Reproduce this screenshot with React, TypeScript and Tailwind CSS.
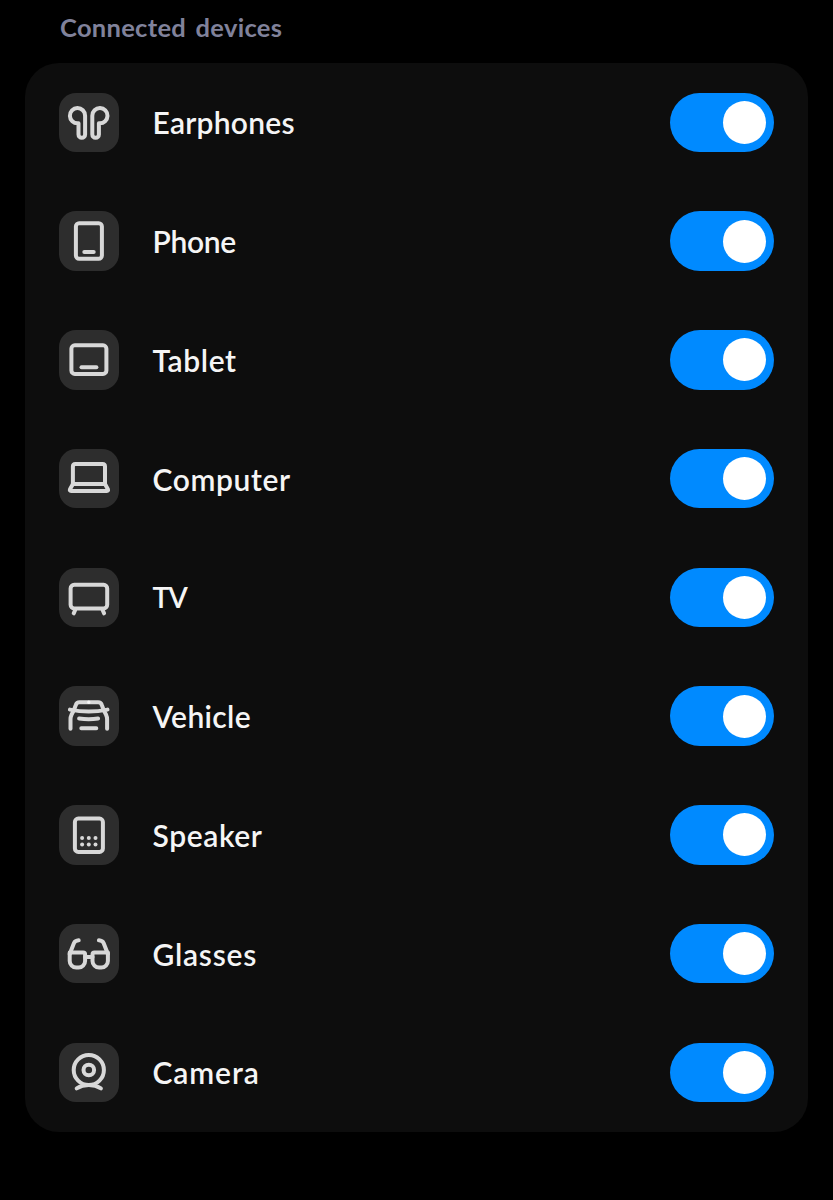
import { ReactNode, useState } from "react";
import clsx from "clsx";

type Device = {
  id: string;
  label: string;
  text: string;
  icon: ReactNode;
};

const DEVICES: Device[] = [
  {
    id: "earphones",
    label: "Earphones",
    text: "text-[30px] tracking-[0.25px]",
    icon: (
      <>
        <path d="M19.5 41.4V30.3H18.8A7.6 7.6 0 1 1 26.1 22.7V41.4A3.3 3.3 0 0 1 19.5 41.4Z" />
        <path d="M39.9 41.4V30.3H40.6A7.6 7.6 0 1 0 33.3 22.7V41.4A3.3 3.3 0 0 0 39.9 41.4Z" />
      </>
    ),
  },
  {
    id: "phone",
    label: "Phone",
    text: "text-[30px] tracking-[-0.3px]",
    icon: (
      <>
        <rect x="16.9" y="12.3" width="26" height="35.4" rx="3.2" />
        <path d="M25.3 41H34.7" />
      </>
    ),
  },
  {
    id: "tablet",
    label: "Tablet",
    text: "text-[30px] tracking-[0.6px]",
    icon: (
      <>
        <rect x="12.4" y="15.3" width="35" height="28.6" rx="3.4" />
        <path d="M22.5 37.3H37.4" />
      </>
    ),
  },
  {
    id: "computer",
    label: "Computer",
    text: "text-[30px] tracking-[0.6px]",
    icon: (
      <>
        <path d="M13.9 35V17.4Q13.9 14.9 16.4 14.9H43.5Q46 14.9 46 17.4V35" />
        <path d="M13.9 35H46L48.9 40.2Q49.6 41.9 47.8 41.9H12.1Q10.3 41.9 11 40.2Z" />
      </>
    ),
  },
  {
    id: "tv",
    label: "TV",
    text: "text-[28.5px] tracking-[-1.2px]",
    icon: (
      <>
        <rect x="11.6" y="16.8" width="36.6" height="23.6" rx="3.6" />
        <path d="M16.2 42L14.7 45.3M43.6 42L45.1 45.3" />
      </>
    ),
  },
  {
    id: "vehicle",
    label: "Vehicle",
    text: "text-[30px] tracking-[0.35px]",
    icon: (
      <>
        <path d="M11.5 42.8V33Q11.5 31 12.5 28.8L14.8 24.4L16.8 19Q17.7 16.3 20.5 16.3H39.1Q41.9 16.3 42.8 19L44.8 24.4L47.1 28.8Q48.1 31 48.1 33V42.8" />
        <path d="M10.9 23.6Q29.8 27.6 48.5 23.6" />
        <path d="M20.1 32.6Q29.8 33.8 39.1 32.6M22.3 42.2H37.3" />
        <circle cx="29.8" cy="16.3" r="1" fill="#f5f5f5" stroke="#f5f5f5" strokeWidth="1.4" />
      </>
    ),
  },
  {
    id: "speaker",
    label: "Speaker",
    text: "text-[30px] tracking-[0.6px]",
    icon: (
      <>
        <rect x="15.9" y="13.6" width="28" height="33.3" rx="3.4" />
        <g fill="currentColor" stroke="none">
          <circle cx="23.1" cy="33.1" r="2" />
          <circle cx="29.8" cy="33.1" r="2" />
          <circle cx="36.5" cy="33.1" r="2" />
          <circle cx="23.1" cy="39.5" r="2" />
          <circle cx="29.8" cy="39.5" r="2" />
          <circle cx="36.5" cy="39.5" r="2" />
        </g>
      </>
    ),
  },
  {
    id: "glasses",
    label: "Glasses",
    text: "text-[30px] tracking-[0.75px]",
    icon: (
      <>
        <path d="M10.7 28.5H24.1Q26.1 28.5 26.1 30.5V37A6.6 6.6 0 0 1 19.5 43.6H17.3A6.6 6.6 0 0 1 10.7 37Z" />
        <path d="M48.9 28.5H35.5Q33.5 28.5 33.5 30.5V37A6.6 6.6 0 0 0 40.1 43.6H42.3A6.6 6.6 0 0 0 48.9 37Z" />
        <path d="M26.1 33H33.5" />
        <path d="M10.7 30L15 19Q16.1 16.6 19.7 16.3" />
        <path d="M48.9 30L44.6 19Q43.5 16.6 39.9 16.3" />
      </>
    ),
  },
  {
    id: "camera",
    label: "Camera",
    text: "text-[30px] tracking-[0.9px]",
    icon: (
      <>
        <circle cx="29.8" cy="27" r="15.1" />
        <circle cx="29.8" cy="27" r="5.3" />
        <path d="M17.7 45.4Q23.1 42.1 29.8 42.1T41.9 45.4" />
      </>
    ),
  },
];

function Toggle({ label, on, onChange }: { label: string; on: boolean; onChange: () => void }) {
  return (
    <button
      type="button"
      role="switch"
      aria-checked={on}
      aria-label={label}
      onClick={onChange}
      className={clsx(
        "flex h-[59.5px] w-[104.5px] items-center rounded-full px-[8.5px] transition-colors",
        on ? "justify-end bg-[#008aff]" : "justify-start bg-[#3a3a3a]"
      )}
    >
      <span className="size-[43px] rounded-full bg-white" />
    </button>
  );
}

export default function App() {
  const [off, setOff] = useState<string[]>([]);

  const toggle = (id: string) =>
    setOff((prev) => (prev.includes(id) ? prev.filter((d) => d !== id) : [...prev, id]));

  return (
    <div className="h-[1200px] w-[833px] overflow-hidden bg-black pl-[25.3px] pr-[25.4px] font-['Lato','Liberation_Sans',sans-serif]">
      <h2 className="flex h-[63px] items-start pl-[34.7px] pt-[11px] text-[25.5px] leading-8 font-bold tracking-[0.3px] text-[#80829b] [word-spacing:3px]">
        Connected devices
      </h2>
      <ul className="rounded-[34px] bg-[#0d0d0d]">
        {DEVICES.map(({ id, label, text, icon }) => (
          <li key={id} className="flex h-[118.75px] items-center pl-[34px] pr-[33.6px]">
            <span className="flex size-[59.5px] items-center justify-center rounded-[17px] bg-[#2d2d2d] text-[#d8d8d8]">
              <svg
                viewBox="0 0 59.5 59.5"
                className="size-full"
                fill="none"
                stroke="currentColor"
                strokeWidth="4"
                strokeLinecap="round"
                strokeLinejoin="round"
              >
                {icon}
              </svg>
            </span>
            <span className={clsx("ml-[33.7px] flex-1 leading-9 font-semibold text-[#f5f5f5]", text)}>
              {label}
            </span>
            <Toggle label={label} on={!off.includes(id)} onChange={() => toggle(id)} />
          </li>
        ))}
      </ul>
    </div>
  );
}
